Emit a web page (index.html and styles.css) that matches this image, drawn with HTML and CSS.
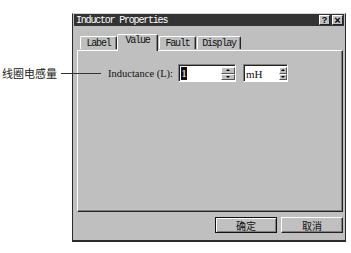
FILE: index.html
```html
<!DOCTYPE html>
<html lang="zh">

<head>
    <meta charset="UTF-8">
    <title>Inductor Properties</title>
    <link rel="stylesheet" href="styles.css">
</head>

<body>
    <div class="callout">
        <span>线圈电感量</span>
        <i class="leader"></i>
    </div>

    <div class="dialog">
        <div class="titlebar">
            <span class="title">Inductor Properties</span>
            <div class="caps">
                <span class="cap">?</span>
                <span class="cap cap-close">×</span>
            </div>
        </div>

        <div class="tabs">
            <div class="tab tab-label">Label</div>
            <div class="tab tab-value active">Value</div>
            <div class="tab tab-fault">Fault</div>
            <div class="tab tab-display">Display</div>
        </div>

        <div class="panel">
            <div class="field-row">
                <label class="field-label">Inductance (L):</label>
                <div class="spin spin-value">
                    <span class="sel">1</span>
                    <div class="arrows">
                        <i class="up"></i>
                        <i class="down"></i>
                    </div>
                </div>
                <div class="spin spin-unit">
                    <span class="unit-text">mH</span>
                    <div class="arrows narrow">
                        <i class="up"></i>
                        <i class="down"></i>
                    </div>
                </div>
            </div>
        </div>

        <div class="actions">
            <button class="btn default">确定</button>
            <button class="btn">取消</button>
        </div>
    </div>
</body>

</html>
```

FILE: styles.css
```css
body {
    margin: 0;
    padding: 13px 0 0 72px;
    background-color: #fff;
    font-family: "Liberation Serif", serif;
}

/* annotation on the left */
.callout {
    position: absolute;
    left: 2px;
    top: 66px;
    display: flex;
    align-items: center;
    gap: 4px;
    font-family: "Noto Sans CJK SC", sans-serif;
    font-size: 11px;
    line-height: 14px;
    color: #222;
    z-index: 2;
}

.leader {
    display: block;
    width: 40px;
    height: 1px;
    margin-top: 1px;
    background-color: #333;
}

/* dialog frame */
.dialog {
    width: 274px;
    height: 229px;
    box-sizing: border-box;
    background-color: #bfbfbf;
    border-top: 1px solid #d6d6d6;
    border-left: 1px solid #2a2a2a;
    border-right: 1px solid #2a2a2a;
    border-bottom: 2px solid #2a2a2a;
    padding: 0 1px 1px 1px;
    display: flex;
    flex-direction: column;
}

.titlebar {
    height: 12px;
    background-color: #333;
    display: flex;
    align-items: center;
    justify-content: space-between;
    padding: 0 1px 0 1px;
}

.title {
    font-family: "Liberation Mono", monospace;
    font-size: 10px;
    letter-spacing: -1.2px;
    color: #fff;
    white-space: nowrap;
    padding-left: 1px;
}

.caps {
    display: flex;
    gap: 2px;
}

.cap {
    width: 11px;
    height: 10px;
    box-sizing: border-box;
    background-color: #c0c0c0;
    border-top: 1px solid #fff;
    border-left: 1px solid #fff;
    border-right: 1px solid #222;
    border-bottom: 1px solid #222;
    font-family: "Liberation Sans", sans-serif;
    font-weight: bold;
    font-size: 9px;
    line-height: 8px;
    text-align: center;
    color: #000;
}

.cap-close {
    font-size: 11px;
}

/* tabs */
.tabs {
    display: flex;
    align-items: flex-end;
    height: 16px;
    margin-top: 8px;
    padding-left: 6px;
    position: relative;
    z-index: 1;
}

.tab {
    height: 13px;
    box-sizing: border-box;
    border-top: 1px solid #fff;
    border-left: 1px solid #fff;
    border-right: 1px solid #222;
    border-radius: 2px 2px 0 0;
    box-shadow: inset -1px 0 #808080;
    font-family: "Liberation Mono", monospace;
    font-size: 10px;
    letter-spacing: -1.2px;
    line-height: 13px;
    text-align: center;
    color: #111;
    margin-bottom: 1px;
}

.tab-label {
    width: 37px;
}

.tab-value {
    width: 41px;
}

.tab-fault {
    width: 37px;
    margin-left: 1px;
}

.tab-display {
    width: 44px;
    margin-left: 1px;
}

.tab.active {
    height: 17px;
    margin-bottom: -1px;
    background-color: #bfbfbf;
    line-height: 11px;
}

/* panel */
.panel {
    height: 162px;
    box-sizing: border-box;
    margin: 0 1px 0 3px;
    border-top: 1px solid #fff;
    border-left: 1px solid #fff;
    border-right: 1px solid #222;
    border-bottom: 1px solid #222;
    box-shadow: inset -1px -1px #808080;
    padding: 13px 0 0 30px;
}

.field-row {
    display: flex;
    align-items: center;
    height: 18px;
}

.field-label {
    width: 70px;
    font-size: 10.5px;
    color: #111;
    margin-top: 1px;
}

.spin {
    height: 18px;
    box-sizing: border-box;
    background-color: #fff;
    border-top: 1px solid #808080;
    border-left: 1px solid #808080;
    border-right: 1px solid #fff;
    border-bottom: 1px solid #fff;
    box-shadow: inset 1px 1px #222;
    display: flex;
    align-items: stretch;
    justify-content: space-between;
    padding: 2px 0 1px 2px;
}

.spin-value {
    width: 58px;
}

.spin-unit {
    width: 45px;
    margin-left: 7px;
}

.sel {
    display: block;
    width: 6px;
    background-color: #111;
    color: #fff;
    font-size: 11px;
    line-height: 13px;
    text-align: center;
}

.unit-text {
    font-size: 11px;
    line-height: 14px;
    color: #111;
}

.arrows {
    width: 14px;
    display: flex;
    flex-direction: column;
}

.arrows.narrow {
    width: 8px;
}

.arrows i {
    flex: 1;
    position: relative;
    background-color: #c0c0c0;
    border-top: 1px solid #fff;
    border-left: 1px solid #fff;
    border-right: 1px solid #555;
    border-bottom: 1px solid #555;
}

.arrows i::after {
    content: "";
    position: absolute;
    left: 50%;
    top: 50%;
    margin: -1px 0 0 -2px;
    border-left: 2px solid transparent;
    border-right: 2px solid transparent;
}

.arrows .up::after {
    border-bottom: 2px solid #000;
}

.arrows .down::after {
    border-top: 2px solid #000;
}

/* buttons */
.actions {
    display: flex;
    justify-content: flex-end;
    gap: 4px;
    margin-top: 5px;
    padding-right: 1px;
}

.btn {
    width: 62px;
    height: 16px;
    padding: 0;
    box-sizing: border-box;
    background-color: #c0c0c0;
    border-top: 1px solid #fff;
    border-left: 1px solid #fff;
    border-right: 1px solid #222;
    border-bottom: 1px solid #222;
    box-shadow: inset -1px -1px #808080;
    font-family: "Noto Sans CJK SC", sans-serif;
    font-size: 10px;
    line-height: 13px;
    color: #111;
}

.btn.default {
    border: 1px solid #111;
    box-shadow: inset 1px 1px #fff, inset -1px -1px #808080;
}
```
